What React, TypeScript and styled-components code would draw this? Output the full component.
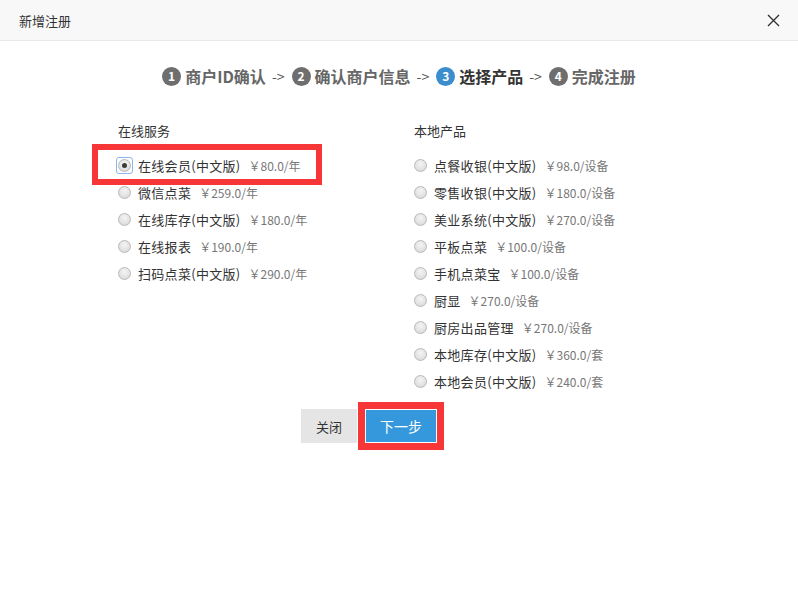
import React from 'react';
import styled, { createGlobalStyle } from 'styled-components';

const GlobalStyle = createGlobalStyle`
  html, body {
    margin: 0;
    padding: 0;
    background: #fff;
  }
  body {
    font-family: "Noto Sans CJK SC", "Microsoft YaHei", "Liberation Sans", sans-serif;
    color: #333;
  }
  *, *::before, *::after { box-sizing: border-box; }
`;

const Dialog = styled.div`
  width: 798px;
  height: 597px;
  background: #fff;
  display: flex;
  flex-direction: column;
`;

const Header = styled.div`
  height: 41px;
  flex: none;
  display: flex;
  align-items: center;
  justify-content: space-between;
  padding: 0 19px 0 19px;
  background: #f8f8f8;
  border-bottom: 1px solid #e9e9e9;
`;

const Title = styled.div`
  font-size: 13px;
  color: #333;
`;

const CloseButton = styled.button`
  width: 14px;
  height: 14px;
  padding: 0;
  border: none;
  background: none;
  display: flex;
  align-items: center;
  justify-content: center;
  cursor: pointer;
  margin-right: -1px;
`;

const Steps = styled.div`
  margin-top: 25px;
  height: 20px;
  display: flex;
  align-items: center;
  justify-content: center;
`;

const Step = styled.div`
  display: flex;
  align-items: center;
  gap: 4px;
`;

const StepNum = styled.span<{ $active?: boolean }>`
  width: 19px;
  height: 19px;
  border-radius: 50%;
  background: ${({ $active }) => ($active ? '#3c8dcd' : '#6e6e6e')};
  color: #fff;
  font-size: 12px;
  font-weight: 700;
  display: flex;
  align-items: center;
  justify-content: center;
  line-height: 1;
`;

const StepLabel = styled.span<{ $active?: boolean }>`
  font-size: 16px;
  font-weight: 700;
  line-height: 20px;
  color: ${({ $active }) => ($active ? '#333' : '#666')};
`;

const Arrow = styled.span`
  font-size: 14px;
  color: #555;
  margin: 0 7px 0 6px;
  line-height: 20px;
`;

const Columns = styled.div`
  margin-top: 35px;
  padding-left: 118px;
  display: grid;
  grid-template-columns: 296px 296px;
`;

const Column = styled.div`
  display: flex;
  flex-direction: column;
`;

const SectionTitle = styled.div`
  font-size: 13px;
  line-height: 20px;
  color: #333;
  margin-bottom: 11px;
`;

const Item = styled.label<{ $marked?: boolean }>`
  position: relative;
  height: 27px;
  display: flex;
  align-items: center;
  gap: 7px;
  cursor: pointer;

  &::after {
    content: '';
    display: ${({ $marked }) => ($marked ? 'block' : 'none')};
    position: absolute;
    left: -26px;
    top: -8px;
    width: 230px;
    height: 41px;
    border: 6px solid #f73737;
    pointer-events: none;
  }
`;

const Radio = styled.span<{ $checked?: boolean }>`
  position: relative;
  width: 13px;
  height: 13px;
  flex: none;
  border-radius: 50%;
  border: 1px solid #b9b9b9;
  background: radial-gradient(circle at 50% 35%, #f4f4f4 0%, #e2e2e2 60%, #d2d2d2 100%);

  &::before {
    content: '';
    display: ${({ $checked }) => ($checked ? 'block' : 'none')};
    position: absolute;
    left: -3px;
    top: -3px;
    width: 17px;
    height: 17px;
    border: 1px solid #8ab8ee;
    border-radius: 3px;
  }

  &::after {
    content: '';
    display: ${({ $checked }) => ($checked ? 'block' : 'none')};
    position: absolute;
    left: 3px;
    top: 3px;
    width: 5px;
    height: 5px;
    border-radius: 50%;
    background: #3a3a3a;
  }
`;

const Name = styled.span`
  font-size: 13px;
  color: #333;
  letter-spacing: 0.3px;
`;

const Price = styled.span`
  font-size: 12px;
  color: #777;
  margin-left: 1px;
`;

const Footer = styled.div`
  margin-top: 14px;
  padding-left: 301px;
  display: flex;
  gap: 8px;
`;

const Button = styled.button<{ $primary?: boolean; $marked?: boolean }>`
  height: 34px;
  padding: 0;
  width: ${({ $primary }) => ($primary ? '72px' : '56px')};
  border: ${({ $primary }) => ($primary ? '1px solid #fff' : 'none')};
  background: ${({ $primary }) => ($primary ? '#3598dc' : '#e5e5e5')};
  color: ${({ $primary }) => ($primary ? '#fff' : '#333')};
  font-family: inherit;
  font-size: ${({ $primary }) => ($primary ? '14px' : '13px')};
  cursor: pointer;
  box-shadow: ${({ $marked }) => ($marked ? '0 0 0 7px #f73737' : 'none')};
`;

const steps = ['商户ID确认', '确认商户信息', '选择产品', '完成注册'];

const online = [
  { name: '在线会员(中文版)', price: '￥80.0/年' },
  { name: '微信点菜', price: '￥259.0/年' },
  { name: '在线库存(中文版)', price: '￥180.0/年' },
  { name: '在线报表', price: '￥190.0/年' },
  { name: '扫码点菜(中文版)', price: '￥290.0/年' },
];

const local = [
  { name: '点餐收银(中文版)', price: '￥98.0/设备' },
  { name: '零售收银(中文版)', price: '￥180.0/设备' },
  { name: '美业系统(中文版)', price: '￥270.0/设备' },
  { name: '平板点菜', price: '￥100.0/设备' },
  { name: '手机点菜宝', price: '￥100.0/设备' },
  { name: '厨显', price: '￥270.0/设备' },
  { name: '厨房出品管理', price: '￥270.0/设备' },
  { name: '本地库存(中文版)', price: '￥360.0/套' },
  { name: '本地会员(中文版)', price: '￥240.0/套' },
];

const CloseIcon = () => (
  <svg width="13" height="13" viewBox="0 0 13 13">
    <path d="M1 1L12 12M12 1L1 12" stroke="#333" strokeWidth="1.4" fill="none" />
  </svg>
);

export default function App() {
  const current = 2;
  const selected = '在线会员(中文版)';

  return (
    <>
      <GlobalStyle />
      <Dialog>
        <Header>
          <Title>新增注册</Title>
          <CloseButton aria-label="关闭">
            <CloseIcon />
          </CloseButton>
        </Header>
        <Steps>
          {steps.map((label, i) => (
            <React.Fragment key={label}>
              <Step>
                <StepNum $active={i === current}>{i + 1}</StepNum>
                <StepLabel $active={i === current}>{label}</StepLabel>
              </Step>
              {i < steps.length - 1 && <Arrow>-&gt;</Arrow>}
            </React.Fragment>
          ))}
        </Steps>
        <Columns>
          <Column>
            <SectionTitle>在线服务</SectionTitle>
            {online.map((p) => (
              <Item key={p.name} $marked={p.name === selected}>
                <Radio $checked={p.name === selected} />
                <Name>{p.name}</Name>
                <Price>{p.price}</Price>
              </Item>
            ))}
          </Column>
          <Column>
            <SectionTitle>本地产品</SectionTitle>
            {local.map((p) => (
              <Item key={p.name}>
                <Radio />
                <Name>{p.name}</Name>
                <Price>{p.price}</Price>
              </Item>
            ))}
          </Column>
        </Columns>
        <Footer>
          <Button>关闭</Button>
          <Button $primary $marked>下一步</Button>
        </Footer>
      </Dialog>
    </>
  );
}
